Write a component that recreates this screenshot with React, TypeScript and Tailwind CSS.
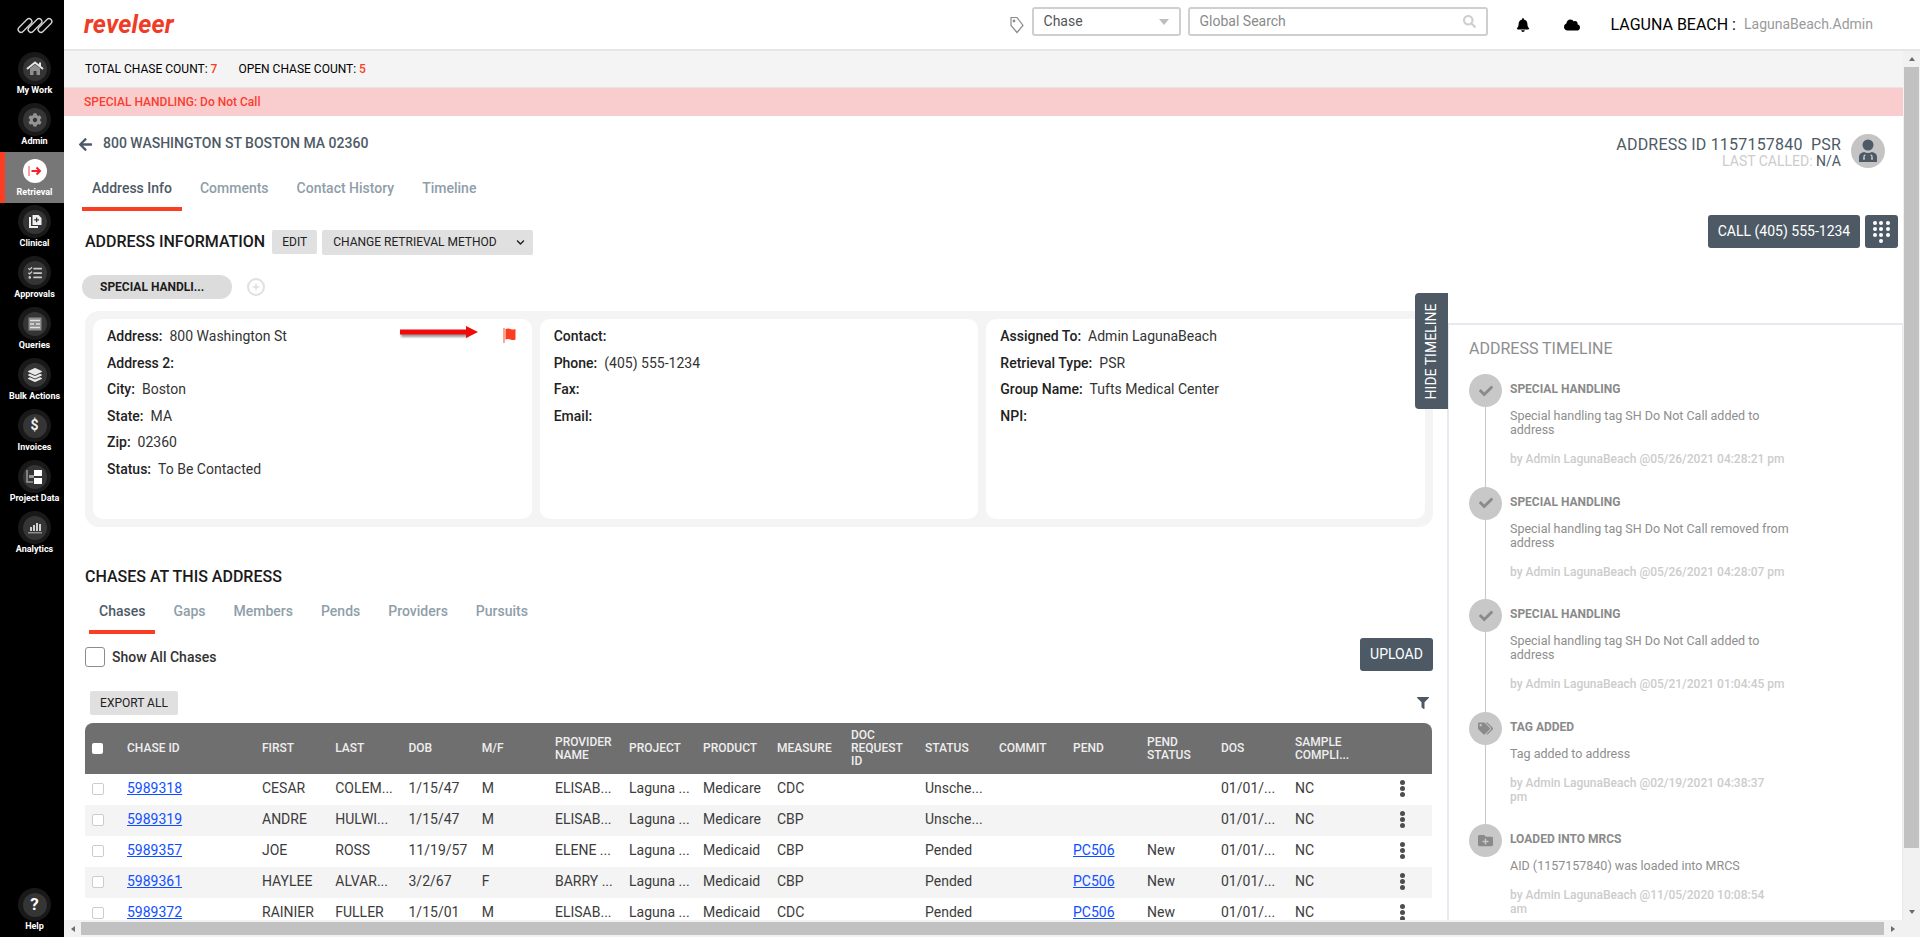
import React from "react";
import {
  FaCog,
  FaLayerGroup,
  FaTasks,
  FaBell,
  FaCloud,
  FaFilter,
  FaSearch,
  FaTags,
  FaFolderPlus,
  FaCheck,
  FaArrowLeft,
  FaChevronDown,
  FaPlus,
} from "react-icons/fa";

const HomeIcon = () => (
  <svg width="18" height="15" viewBox="0 0 18 15">
    <path d="M4 7.500 9 3.500l5 4V14h-3.500v-4h-3v4H4z" fill="#8f8f8f" />
    <path d="M1 8 9 1.500 17 8" fill="none" stroke="#e6e6e6" strokeWidth="2" />
    <rect x="13" y="1.500" width="2" height="3.500" fill="#e6e6e6" />
  </svg>
);

const RetrievalIcon = () => (
  <svg width="14" height="12" viewBox="0 0 14 12" fill="none" stroke="#f5222d" strokeWidth="1.600">
    <path d="M1 1v10" stroke="#f58a8a" />
    <path d="M3.500 6h8.500M8.500 2.500 12 6l-3.500 3.500" strokeWidth="2" />
  </svg>
);

const ClinicalIcon = () => (
  <svg width="14" height="15" viewBox="0 0 14 15" fill="#f0f0f0">
    <path d="M1 3h2v9h7v2H1z" />
    <path d="M4.500 1h6l3 3v7h-9z" />
    <path d="M8 3.500h1.200v1.800H11v1.200H9.200v1.800H8V6.500H6.200V5.300H8z" fill="#333" />
  </svg>
);

const QueriesIcon = () => (
  <svg width="14" height="14" viewBox="0 0 14 14">
    <rect x="0.500" y="0.500" width="13" height="13" fill="#8c8c8c" />
    <path d="M2 3.500h10M2 7h4M8 7h4M2 10.500h10" stroke="#e0e0e0" strokeWidth="1.300" />
  </svg>
);

const ProjectIcon = () => (
  <svg width="18" height="16" viewBox="0 0 18 16">
    <path d="M1 1v12h6" fill="none" stroke="#9a9a9a" strokeWidth="1.500" />
    <rect x="3" y="6" width="5" height="3" fill="#9a9a9a" />
    <rect x="8" y="1" width="8" height="6" fill="#fff" />
    <rect x="8" y="9" width="8" height="6" fill="#fff" />
  </svg>
);

const AnalyticsIcon = () => (
  <svg width="14" height="13" viewBox="0 0 14 13" fill="#cfcfcf">
    <rect x="0" y="11" width="14" height="1.500" fill="#8c8c8c" />
    <rect x="2" y="6" width="2" height="4" />
    <rect x="5" y="4" width="2" height="6" />
    <rect x="8" y="2" width="2" height="8" />
    <rect x="11" y="3" width="2" height="7" />
  </svg>
);

const FlagIcon = () => (
  <svg className="absolute left-[410px] top-[9px]" width="15" height="15" viewBox="0 0 15 15">
    <rect x="0" y="0" width="2" height="15" fill="#f9a58f" />
    <path d="M2.500 1q2.500-1 5 0t5 0V11.500q-2.500 1-5 0t-5 0z" fill="#fb3d22" />
  </svg>
);

const navItems: { label: string; icon: React.ReactNode; active?: boolean }[] = [
  { label: "My Work", icon: <HomeIcon /> },
  { label: "Admin", icon: <FaCog className="text-[14px] text-[#949494]" /> },
  { label: "Retrieval", icon: <RetrievalIcon />, active: true },
  { label: "Clinical", icon: <ClinicalIcon /> },
  { label: "Approvals", icon: <FaTasks className="text-[14px] text-[#c8c8c8]" /> },
  { label: "Queries", icon: <QueriesIcon /> },
  { label: "Bulk Actions", icon: <FaLayerGroup className="text-[14px] text-[#e8e8e8]" /> },
  { label: "Invoices", icon: <span className="text-[14px] font-bold text-[#f0f0f0]">$</span> },
  { label: "Project Data", icon: <ProjectIcon /> },
  { label: "Analytics", icon: <AnalyticsIcon /> },
];

const NavItem = ({ label, icon, active }: { label: string; icon: React.ReactNode; active?: boolean }) => (
  <div
    className={`flex h-[51px] flex-col items-center pt-[2px] border-l-[5px] ${
      active ? "border-[#fb3d22] bg-[#777777]" : "border-black"
    }`}
  >
    <div
      className={`flex h-[33px] w-[33px] shrink-0 items-center justify-center rounded-full ${
        active ? "" : "bg-[#191919]"
      }`}
    >
      <div
        className={`flex h-[24px] w-[24px] items-center justify-center rounded-full ${
          active ? "bg-white" : "bg-[#353535]"
        }`}
      >
        {icon}
      </div>
    </div>
    <span className="-mt-[1px] whitespace-nowrap text-[9px] font-bold leading-[12px] text-white">{label}</span>
  </div>
);

// three interlocked capsules: a light stroke with a black one laid on top
const Logo = () => (
  <svg width="36" height="17" viewBox="0 0 36 17" fill="none" strokeLinecap="round">
    {[0, 10, 20].map((x) => (
      <g key={x}>
        <path d={`M${x + 4} 12.500 ${x + 12} 4.500`} stroke="#d4d4d4" strokeWidth="7" />
        <path d={`M${x + 4} 12.500 ${x + 12} 4.500`} stroke="#000" strokeWidth="4.400" />
      </g>
    ))}
  </svg>
);

const Sidebar = () => (
  <aside className="flex h-full w-[64px] shrink-0 flex-col bg-black">
    <div className="flex h-[50px] items-center justify-center pl-[5px]">
      <Logo />
    </div>
    {navItems.map((item) => (
      <NavItem key={item.label} {...item} />
    ))}
    <div className="mt-auto">
      <NavItem
        label="Help"
        icon={<span className="text-[17px] font-bold leading-none text-white">?</span>}
      />
    </div>
  </aside>
);

const Header = () => (
  <header className="flex h-[51px] shrink-0 items-center border-b-2 border-[#e6e6e6] bg-white pl-[20px]">
    <span className="text-[25px] font-bold italic leading-none tracking-[0.2px] text-[#f03c26]">reveleer</span>
    <div className="ml-auto flex items-center">
      <svg width="16" height="18" viewBox="0 0 16 18" fill="none" stroke="#8a8a8a" strokeWidth="1.200">
        <path d="M2 1.500h6l6 8-6 7-6-7z" />
        <circle cx="5" cy="5" r="0.800" />
      </svg>
      <div className="mb-[6px] ml-[7px] flex h-[29px] w-[149px] items-center rounded-[3px] border-2 border-[#cfcfcf] pl-[10px] pr-[10px] text-[14px] text-[#555]">
        Chase
        <span className="ml-auto h-0 w-0 border-x-[5px] border-t-[6px] border-x-transparent border-t-[#bdbdbd]" />
      </div>
      <div className="mb-[6px] ml-[7px] flex h-[29px] w-[300px] items-center rounded-[3px] border-2 border-[#cfcfcf] pl-[10px] pr-[10px] text-[14px] text-[#8a8a8a]">
        Global Search
        <FaSearch className="ml-auto text-[13px] text-[#cfcfcf]" />
      </div>
      <FaBell className="ml-[28px] text-[14px] text-black" />
      <FaCloud className="ml-[34px] text-[16px] text-black" />
      <span className="ml-[31px] text-[16px] text-black">LAGUNA BEACH :</span>
      <span className="ml-[8px] mr-[47px] text-[14px] text-[#9a9a9a]">LagunaBeach.Admin</span>
    </div>
  </header>
);

const Field = ({ label, value }: { label: string; value?: string }) => (
  <div className="flex h-[26.500px] items-center text-[14px] leading-none">
    <span className="font-medium text-[#222]">{label}:</span>
    {value && <span className="ml-[7px] text-[#333]">{value}</span>}
  </div>
);

const Tab = ({ label, active }: { label: string; active?: boolean }) => (
  <div
    className={`border-b-4 px-[10px] pb-[9px] text-[14px] font-medium leading-[20px] ${
      active ? "border-[#fb3d22] text-[#4d5a65]" : "border-transparent text-[#8f9ea9]"
    }`}
  >
    {label}
  </div>
);

const columns = [
  "CHASE ID",
  "FIRST",
  "LAST",
  "DOB",
  "M/F",
  "PROVIDER\nNAME",
  "PROJECT",
  "PRODUCT",
  "MEASURE",
  "DOC\nREQUEST\nID",
  "STATUS",
  "COMMIT",
  "PEND",
  "PEND\nSTATUS",
  "DOS",
  "SAMPLE\nCOMPLI...",
];

const rows = [
  ["5989318", "CESAR", "COLEM...", "1/15/47", "M", "ELISAB...", "Laguna ...", "Medicare", "CDC", "", "Unsche...", "", "", "", "01/01/...", "NC"],
  ["5989319", "ANDRE", "HULWI...", "1/15/47", "M", "ELISAB...", "Laguna ...", "Medicare", "CBP", "", "Unsche...", "", "", "", "01/01/...", "NC"],
  ["5989357", "JOE", "ROSS", "11/19/57", "M", "ELENE ...", "Laguna ...", "Medicaid", "CBP", "", "Pended", "", "PC506", "New", "01/01/...", "NC"],
  ["5989361", "HAYLEE", "ALVAR...", "3/2/67", "F", "BARRY ...", "Laguna ...", "Medicaid", "CBP", "", "Pended", "", "PC506", "New", "01/01/...", "NC"],
  ["5989372", "RAINIER", "FULLER", "1/15/01", "M", "ELISAB...", "Laguna ...", "Medicaid", "CDC", "", "Pended", "", "PC506", "New", "01/01/...", "NC"],
];

const ChaseTable = () => (
  <div className="mt-[8px] w-[1347px]">
    <div className="grid h-[51px] grid-cols-[42px_135px_repeat(4,73.250px)_repeat(11,74px)_63px] items-center rounded-t-[8px] bg-[#6f6f6f] text-[12px] font-medium leading-[13px] text-[#eeeeee]">
      <div className="pl-[7px]">
        <div className="h-[11px] w-[11px] rounded-[2px] bg-white" />
      </div>
      {columns.map((c) => (
        <div key={c} className="whitespace-pre-line">
          {c}
        </div>
      ))}
      <div />
    </div>
    {rows.map((row, i) => (
      <div
        key={row[0]}
        className={`grid h-[31px] grid-cols-[42px_135px_repeat(4,73.250px)_repeat(11,74px)_63px] items-center pb-[2px] text-[14px] text-[#3c3c3c] ${
          i % 2 === 1 ? "bg-[#f4f4f4]" : "bg-white"
        }`}
      >
        <div className="pl-[7px]">
          <div className="h-[12px] w-[12px] rounded-[2px] border border-[#cccccc] bg-white" />
        </div>
        {row.map((cell, j) =>
          (j === 0 || j === 12) && cell ? (
            <a key={j} className="justify-self-start text-[#0f4fff] underline">
              {cell}
            </a>
          ) : (
            <div key={j} className="whitespace-nowrap">
              {cell}
            </div>
          )
        )}
        <div className="flex flex-col items-center gap-[1px] pl-[4px]">
          <span className="h-[5px] w-[5px] rounded-full bg-[#4d4d4d]" />
          <span className="h-[5px] w-[5px] rounded-full bg-[#4d4d4d]" />
          <span className="h-[5px] w-[5px] rounded-full bg-[#4d4d4d]" />
        </div>
      </div>
    ))}
  </div>
);

const LeftColumn = () => (
  <div className="w-[1383px] shrink-0 pl-[21px] pr-[14px]">
    <div className="mt-[15px] flex h-[24px] items-center">
      <h2 className="text-[16px] font-medium text-[#1a1a1a]">ADDRESS INFORMATION</h2>
      <button className="ml-[7px] flex h-[24px] w-[45px] items-center justify-center rounded-[2px] bg-[#e0e0e0] text-[12px] text-[#222]">
        EDIT
      </button>
      <button className="ml-[5px] flex h-[25px] w-[211px] items-center justify-between rounded-[2px] bg-[#e0e0e0] pl-[11px] pr-[8px] text-[12px] text-[#222]">
        CHANGE RETRIEVAL METHOD
        <FaChevronDown className="text-[9px]" />
      </button>
    </div>

    <div className="-ml-[3px] mt-[21px] flex h-[24px] items-center">
      <div className="flex h-[24px] w-[150px] items-center rounded-full bg-[#dcdcdc] pl-[18px] text-[12px] font-bold text-[#1c1c1c]">
        SPECIAL HANDLI...
      </div>
      <div className="ml-[15px] flex h-[18px] w-[18px] items-center justify-center rounded-full border-2 border-[#e0e0e0]">
        <FaPlus className="text-[8px] text-[#e0e0e0]" />
      </div>
    </div>

    <div className="relative mt-[12px] grid h-[216px] w-[1348px] grid-cols-3 gap-[8px] rounded-[14px] bg-[#f4f4f4] p-[8px]">
      <div className="relative rounded-[10px] bg-white pl-[14px] pt-[4px]">
        <Field label="Address" value="800 Washington St" />
        <Field label="Address 2" />
        <Field label="City" value="Boston" />
        <Field label="State" value="MA" />
        <Field label="Zip" value="02360" />
        <Field label="Status" value="To Be Contacted" />
        <FlagIcon />
      </div>
      <div className="rounded-[10px] bg-white pl-[14px] pt-[4px]">
        <Field label="Contact" />
        <Field label="Phone" value="(405) 555-1234" />
        <Field label="Fax" />
        <Field label="Email" />
      </div>
      <div className="rounded-[10px] bg-white pl-[14px] pt-[4px]">
        <Field label="Assigned To" value="Admin LagunaBeach" />
        <Field label="Retrieval Type" value="PSR" />
        <Field label="Group Name" value="Tufts Medical Center" />
        <Field label="NPI" />
      </div>
      {/* annotation arrow drawn over the card */}
      <div className="absolute left-[315px] top-[15px] h-[12px] w-[80px]">
        <div className="absolute left-[1px] top-[7px] h-[4px] w-[68px] bg-black/40 blur-[1px]" />
        <svg className="absolute left-0 top-0" width="80" height="12" viewBox="0 0 80 12">
          <path d="M0 3.500h66V0l12 6-12 6V8.500H0z" fill="#f00b0b" />
        </svg>
      </div>
    </div>

    <h2 className="mt-[40px] h-[20px] text-[16px] font-medium leading-[20px] text-[#1a1a1a]">
      CHASES AT THIS ADDRESS
    </h2>
    <div className="ml-[4px] mt-[14px] flex gap-[8px]">
      <Tab label="Chases" active />
      <Tab label="Gaps" />
      <Tab label="Members" />
      <Tab label="Pends" />
      <Tab label="Providers" />
      <Tab label="Pursuits" />
    </div>

    <div className="mt-[4px] flex h-[39px] w-[1348px] items-start">
      <div className="mt-[9px] h-[20px] w-[20px] rounded-[3px] border border-[#8c8c8c] bg-white" />
      <span className="ml-[7px] mt-[10px] text-[14px] font-medium leading-[18px] text-[#333]">Show All Chases</span>
      <button className="ml-auto flex h-[33px] w-[73px] items-center justify-center rounded-[3px] bg-[#4d5a65] text-[14px] text-white">
        UPLOAD
      </button>
    </div>

    <div className="mt-[14px] flex h-[24px] w-[1348px] items-center">
      <button className="ml-[5px] flex h-[24px] w-[88px] items-center justify-center rounded-[2px] bg-[#e0e0e0] text-[12px] text-[#222]">
        EXPORT ALL
      </button>
      <FaFilter className="ml-auto mr-[4px] text-[12px] text-[#4d5a65]" />
    </div>

    <ChaseTable />
  </div>
);

const timeline = [
  {
    icon: <FaCheck className="text-[14px] text-[#8a8a8a]" />,
    title: "SPECIAL HANDLING",
    text: "Special handling tag SH Do Not Call added to\naddress",
    by: "by Admin LagunaBeach @05/26/2021 04:28:21 pm",
  },
  {
    icon: <FaCheck className="text-[14px] text-[#8a8a8a]" />,
    title: "SPECIAL HANDLING",
    text: "Special handling tag SH Do Not Call removed from\naddress",
    by: "by Admin LagunaBeach @05/26/2021 04:28:07 pm",
  },
  {
    icon: <FaCheck className="text-[14px] text-[#8a8a8a]" />,
    title: "SPECIAL HANDLING",
    text: "Special handling tag SH Do Not Call added to\naddress",
    by: "by Admin LagunaBeach @05/21/2021 01:04:45 pm",
  },
  {
    icon: <FaTags className="text-[15px] text-[#8a8a8a]" />,
    title: "TAG ADDED",
    text: "Tag added to address",
    by: "by Admin LagunaBeach @02/19/2021 04:38:37\npm",
  },
  {
    icon: <FaFolderPlus className="text-[15px] text-[#8a8a8a]" />,
    title: "LOADED INTO MRCS",
    text: "AID (1157157840) was loaded into MRCS",
    by: "by Admin LagunaBeach @11/05/2020 10:08:54\nam",
  },
];

const Timeline = () => (
  <div className="relative mt-[108px] flex-1 border-l-2 border-r border-t-2 border-[#e8e8ee] pl-[20px] pt-[14px]">
    <div className="absolute -left-[34px] -top-[32px] flex h-[116px] w-[33px] items-center justify-center rounded-l-[4px] bg-[#4d5a65]">
      <span className="-rotate-90 whitespace-nowrap text-[14px] text-white">HIDE TIMELINE</span>
    </div>
    <h3 className="text-[16px] leading-[20px] text-[#8e8e8e]">ADDRESS TIMELINE</h3>
    <div className="mt-[15px]">
      {timeline.map((item, i) => (
        <div key={i} className="flex h-[112.500px]">
          <div className="flex w-[33px] shrink-0 flex-col items-center">
            <div className="flex h-[33px] w-[33px] shrink-0 items-center justify-center rounded-full bg-[#c8c8c8]">
              {item.icon}
            </div>
            {i < timeline.length - 1 && <div className="w-[1px] flex-1 bg-[#c8c8c8]" />}
          </div>
          <div className="ml-[8px] w-[310px] pt-[7px]">
            <div className="text-[12px] font-bold leading-[16px] text-[#8a8a8a]">{item.title}</div>
            <p className="mt-[12px] whitespace-pre-line text-[12.500px] leading-[14px] text-[#8e8e8e]">{item.text}</p>
            <p className="mt-[15px] whitespace-pre-line text-[12px] font-medium leading-[14px] text-[#cccccc]">{item.by}</p>
          </div>
        </div>
      ))}
    </div>
  </div>
);

const ScrollArrow = ({ d }: { d: string }) => (
  <svg width="8" height="8" viewBox="0 0 8 8" fill="#6b6b6b">
    <path d={d} />
  </svg>
);

export default function App() {
  return (
    <div
      className="flex h-[937px] w-[1920px] overflow-hidden bg-white"
      style={{ fontFamily: "Roboto, 'Liberation Sans', sans-serif" }}
    >
      <Sidebar />
      <div className="flex min-w-0 flex-1 flex-col">
        <Header />
        <div className="flex min-h-0 flex-1">
          <div className="flex min-w-0 flex-1 flex-col overflow-hidden">
            <div className="flex h-[37px] shrink-0 items-center gap-[15px] border-b border-[#e6e6e6] bg-[#f4f4f4] pl-[21px] text-[12px] text-black">
              <span>
                TOTAL CHASE COUNT: <b className="font-medium text-[#fb3d22]">7</b>
              </span>
              <span className="ml-[6px]">
                OPEN CHASE COUNT: <b className="font-medium text-[#fb3d22]">5</b>
              </span>
            </div>
            <div className="flex h-[28px] shrink-0 items-center bg-[#f9cccd] pl-[20px] text-[12px] font-medium text-[#fb3d2e]">
              SPECIAL HANDLING: Do Not Call
            </div>

            <div className="flex h-[61px] shrink-0 items-start pl-[14px] pr-[18px] pt-[18px]">
              <FaArrowLeft className="mt-[3px] text-[15px] text-[#4d5a65]" />
              <span className="ml-[10px] text-[14px] font-medium leading-[18px] text-[#4d5a65]">
                800 WASHINGTON ST BOSTON MA 02360
              </span>
              <div className="ml-auto flex items-start">
                <div className="pt-[2px] text-right">
                  <div className="text-[16px] leading-[18px] tracking-[0.2px] text-[#4d5a65]">
                    ADDRESS ID 1157157840&nbsp;&nbsp;PSR
                  </div>
                  <div className="text-[14px] leading-[15px] text-[#cccccc]">
                    LAST CALLED: <span className="text-[#4d5a65]">N/A</span>
                  </div>
                </div>
                <div className="ml-[10px] flex h-[34px] w-[34px] items-center justify-center rounded-full bg-[#c4c4c4]">
                  <svg width="20" height="24" viewBox="0 0 20 24" fill="#4d5a65">
                    <circle cx="10" cy="6" r="5.500" />
                    <path d="M1 23v-5q0-4 5-5 4 2 8 0 5 1 5 5v5z" />
                    <path
                      d="M6 20v-2.500q0-1.500 1.500-1.500M14 20v-2.500q0-1.500-1.500-1.500M5 20h2M13 20h2"
                      stroke="#d9d9d9"
                      strokeWidth="1.200"
                      fill="none"
                    />
                  </svg>
                </div>
              </div>
            </div>

            <div className="flex h-[34px] shrink-0 items-end gap-[8px] pl-[18px]">
              <Tab label="Address Info" active />
              <Tab label="Comments" />
              <Tab label="Contact History" />
              <Tab label="Timeline" />
            </div>

            <div className="flex min-h-0 flex-1 overflow-hidden pt-[4px]">
              <LeftColumn />
              <div className="relative flex min-w-0 flex-1 flex-col">
                <div className="absolute right-[5px] top-0 flex gap-[5px]">
                  <button className="flex h-[33px] w-[152px] items-center justify-center rounded-[3px] bg-[#4d5a65] text-[14px] text-white">
                    CALL (405) 555-1234
                  </button>
                  <button className="grid h-[33px] w-[33px] grid-cols-3 place-content-center justify-items-center gap-x-[2px] gap-y-[2px] rounded-[3px] bg-[#4d5a65] px-[8px]">
                    {Array.from({ length: 9 }).map((_, i) => (
                      <span key={i} className="h-[4px] w-[4px] rounded-full bg-white" />
                    ))}
                    <span className="col-start-2 h-[4px] w-[4px] rounded-full bg-white" />
                  </button>
                </div>
                <Timeline />
              </div>
            </div>
          </div>

          <div className="flex w-[17px] shrink-0 flex-col items-center bg-[#f1f1f1]">
            <div className="flex h-[16px] items-center">
              <ScrollArrow d="M4 2 7 6H1z" />
            </div>
            <div className="h-[781px] w-[15px] bg-[#c1c1c1]" />
            <div className="mt-auto flex h-[16px] items-center">
              <ScrollArrow d="M1 2h6L4 6z" />
            </div>
          </div>
        </div>
        <div className="flex h-[17px] shrink-0 items-center bg-[#f1f1f1]">
          <div className="flex w-[17px] justify-center">
            <ScrollArrow d="M6 1v6L2 4z" />
          </div>
          <div className="h-[13px] w-[1803px] bg-[#c1c1c1]" />
          <div className="flex w-[17px] justify-center">
            <ScrollArrow d="M2 1v6l4-3z" />
          </div>
        </div>
      </div>
    </div>
  );
}
